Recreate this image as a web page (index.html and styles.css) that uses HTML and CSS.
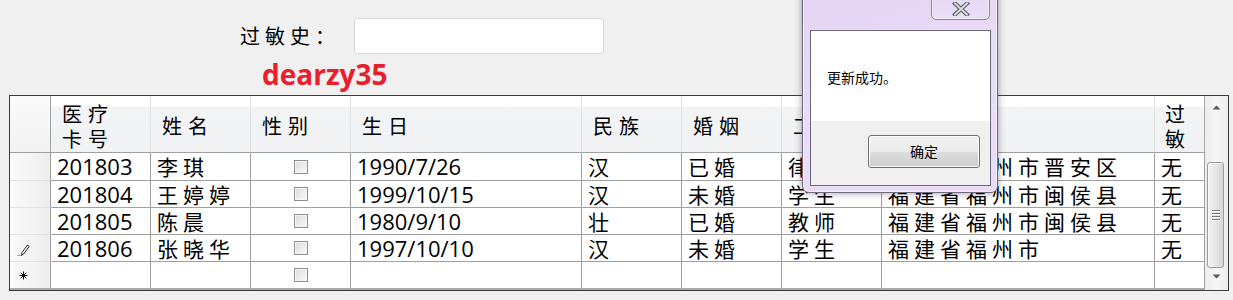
FILE: index.html
```html
<!DOCTYPE html>
<html lang="zh-CN">
<head>
<meta charset="utf-8">
<title>过敏史</title>
<link rel="stylesheet" href="styles.css">
</head>
<body>
<div class="filter">
  <span class="filter-label">过敏史：</span>
  <div class="filter-input"></div>
</div>
<div class="brand">dearzy35</div>

<div class="grid">
  <div class="table">
    <div class="row head">
      <div class="rh corner"></div>
      <div class="hc">医疗<br>卡号</div>
      <div class="hc">姓名</div>
      <div class="hc">性别</div>
      <div class="hc">生日</div>
      <div class="hc">民族</div>
      <div class="hc">婚姻</div>
      <div class="hc">工作</div>
      <div class="hc">地址</div>
      <div class="hc last">过<br>敏</div>
    </div>
    <div class="row first">
      <div class="rh"></div>
      <div class="c num">201803</div>
      <div class="c cjk">李琪</div>
      <div class="c chk"><span class="box"></span></div>
      <div class="c num">1990/7/26</div>
      <div class="c cjk">汉</div>
      <div class="c cjk">已婚</div>
      <div class="c cjk">律师</div>
      <div class="c cjk">福建省福州市晋安区</div>
      <div class="c cjk">无</div>
    </div>
    <div class="row">
      <div class="rh"></div>
      <div class="c num">201804</div>
      <div class="c cjk">王婷婷</div>
      <div class="c chk"><span class="box"></span></div>
      <div class="c num">1999/10/15</div>
      <div class="c cjk">汉</div>
      <div class="c cjk">未婚</div>
      <div class="c cjk">学生</div>
      <div class="c cjk">福建省福州市闽侯县</div>
      <div class="c cjk">无</div>
    </div>
    <div class="row">
      <div class="rh"></div>
      <div class="c num">201805</div>
      <div class="c cjk">陈晨</div>
      <div class="c chk"><span class="box"></span></div>
      <div class="c num">1980/9/10</div>
      <div class="c cjk">壮</div>
      <div class="c cjk">已婚</div>
      <div class="c cjk">教师</div>
      <div class="c cjk">福建省福州市闽侯县</div>
      <div class="c cjk">无</div>
    </div>
    <div class="row">
      <div class="rh icon-cell">
        <svg width="13" height="12" viewBox="0 0 13 12">
          <path d="M0.5 11.5h1M2.5 11.5h1" stroke="#555" stroke-width="1"/>
          <path d="M4.5 11.5 L5 8.5 L10.5 1 L12.2 2.4 L6.8 9.8 Z" fill="#fff" stroke="#222" stroke-width="1" stroke-linejoin="round"/>
        </svg>
      </div>
      <div class="c num">201806</div>
      <div class="c cjk">张晓华</div>
      <div class="c chk"><span class="box"></span></div>
      <div class="c num">1997/10/10</div>
      <div class="c cjk">汉</div>
      <div class="c cjk">未婚</div>
      <div class="c cjk">学生</div>
      <div class="c cjk">福建省福州市</div>
      <div class="c cjk">无</div>
    </div>
    <div class="row lastrow">
      <div class="rh icon-cell star">
        <svg width="9" height="9" viewBox="0 0 9 9">
          <path d="M4.5 0.5v8M0.5 4.5h8M1.7 1.7l5.6 5.6M7.3 1.7l-5.6 5.6" stroke="#111" stroke-width="1"/>
        </svg>
      </div>
      <div class="c"></div>
      <div class="c"></div>
      <div class="c chk"><span class="box"></span></div>
      <div class="c"></div>
      <div class="c"></div>
      <div class="c"></div>
      <div class="c"></div>
      <div class="c"></div>
      <div class="c"></div>
    </div>
  </div>
  <div class="scrollbar">
    <div class="sb-btn up">
      <svg width="9" height="5" viewBox="0 0 9 5"><path d="M0.5 4.5 L4.5 0.5 L8.5 4.5 Z" fill="#5a5a5a"/></svg>
    </div>
    <div class="sb-track">
      <div class="thumb">
        <span class="grip"></span><span class="grip"></span><span class="grip"></span><span class="grip"></span>
      </div>
    </div>
    <div class="sb-btn down">
      <svg width="9" height="5" viewBox="0 0 9 5"><path d="M0.5 0.5 L4.5 4.5 L8.5 0.5 Z" fill="#5a5a5a"/></svg>
    </div>
  </div>
</div>

<div class="dialog">
  <div class="titlebar">
    <div class="close">
      <svg width="18" height="14" viewBox="0 0 18 14">
        <path d="M3 1.5 L15 12.5 M15 1.5 L3 12.5" stroke="#5e5e66" stroke-width="4.2" stroke-linecap="square"/>
        <path d="M3 1.5 L15 12.5 M15 1.5 L3 12.5" stroke="#d8d8de" stroke-width="2" stroke-linecap="square"/>
      </svg>
    </div>
  </div>
  <div class="client">
    <div class="msg">更新成功。</div>
    <div class="footer">
      <div class="ok">确定</div>
    </div>
  </div>
</div>
</body>
</html>
```

FILE: styles.css
```css
html, body {
  margin: 0;
  padding: 0;
}
body {
  width: 1233px;
  height: 300px;
  overflow: hidden;
  position: relative;
  background: #f0f0f0;
  font-family: "Noto Sans CJK SC", "Noto Sans", sans-serif;
  color: #000;
}

.filter {
  display: flex;
  align-items: center;
  height: 36px;
  padding: 18px 0 0 240px;
}
.filter-label {
  width: 114px;
  font-size: 20px;
  letter-spacing: 5px;
  line-height: 36px;
}
.filter-input {
  width: 250px;
  height: 36px;
  box-sizing: border-box;
  background: #fff;
  border: 1px solid #d7d7d7;
  border-radius: 3px;
}

.brand {
  height: 41px;
  padding-left: 262px;
  font-family: "Open Sans", "Noto Sans", sans-serif;
  font-weight: 700;
  font-size: 28px;
  line-height: 41px;
  color: #e8202b;
}

.grid {
  margin-left: 9px;
  width: 1220px;
  height: 196px;
  box-sizing: border-box;
  border: 1px solid #3c3c3c;
  display: flex;
  background: #fff;
}
.table {
  width: 1195px;
  display: flex;
  flex-direction: column;
}
.row {
  display: grid;
  grid-template-columns: 41px 100px 100px 100px 231px 100px 100px 100px 273px 50px;
  height: 27px;
}
.row.head { height: 57px; }
.row.first { height: 28px; }
.row.lastrow { height: 28px; }

.row > div {
  box-sizing: border-box;
  border-right: 1px solid #a0a0a0;
  border-bottom: 1px solid #a0a0a0;
  white-space: nowrap;
}
.row.lastrow > div { border-bottom-width: 2px; border-bottom-color: #ababab; }

.rh {
  background: linear-gradient(to right, #fdfdfd 0, #f7f7f7 25%, #ededed 100%);
}
.row > .rh { border-bottom-color: #e2e2e2; }
.row.head > .rh.corner {
  background: linear-gradient(to bottom, #fafafa 0, #f2f2f2 100%);
  border-bottom-color: #a0a0a0;
}
.row.lastrow > .rh { border-bottom-color: #ababab; }
.icon-cell {
  display: flex;
  align-items: center;
  padding-left: 7px;
}
.icon-cell svg { margin-top: 4px; }
.icon-cell.star { padding-left: 9px; }
.icon-cell.star svg { margin-top: 1px; }

.row.head > .hc {
  display: flex;
  align-items: center;
  padding: 3px 0 0 11px;
  font-size: 20px;
  letter-spacing: 6px;
  line-height: 25px;
  background: linear-gradient(to bottom, #ffffff 0, #ffffff 10px, #f3f4f6 11px, #f1f2f4 100%);
  border-right-color: #e2e2e2;
}
.row.head > .hc.last {
  padding-left: 10px;
  border-right-color: #a8a8a8;
}

.c {
  display: flex;
  align-items: center;
  padding-left: 6px;
  background: #fff;
}
.num {
  font-family: "Open Sans", "Noto Sans", sans-serif;
  font-size: 22px;
  line-height: 25px;
}
.cjk {
  font-size: 21px;
  letter-spacing: 5px;
  line-height: 25px;
}
.c.chk {
  justify-content: center;
  padding-left: 0;
}
.box {
  width: 14px;
  height: 14px;
  box-sizing: border-box;
  border: 1px solid #8e8f8f;
  background: linear-gradient(135deg, #d9d9d9 0, #eeeeee 60%, #fafafa 100%);
  box-shadow: inset 0 0 0 1px #f4f4f4;
}

.scrollbar {
  width: 23px;
  display: flex;
  flex-direction: column;
  background: linear-gradient(to right, #ececec, #f6f6f6 50%, #ececec);
}
.sb-btn {
  height: 18px;
  display: flex;
  justify-content: center;
}
.sb-btn.up { align-items: flex-end; height: 14px; }
.sb-btn.down { align-items: flex-start; height: 16px; padding-top: 1px; }
.sb-track {
  flex: 1;
  padding: 52px 0 0 2px;
}
.thumb {
  width: 17px;
  height: 106px;
  box-sizing: border-box;
  border: 1px solid #9b9b9b;
  border-radius: 3px;
  background: linear-gradient(to right, #f3f3f3 0, #e6e6e6 50%, #d6d6d6 100%);
  box-shadow: inset 1px 1px 0 #fbfbfb;
  display: flex;
  flex-direction: column;
  align-items: center;
  justify-content: center;
  gap: 2px;
}
.grip {
  width: 8px;
  height: 1px;
  background: #7a7a7a;
  box-shadow: 0 1px 0 #fafafa;
}

.dialog {
  position: absolute;
  left: 802px;
  top: -8px;
  width: 196px;
  height: 201px;
  box-sizing: border-box;
  padding: 0 6px 6px 7px;
  border: 1px solid #6e6a7c;
  border-radius: 0 0 7px 7px;
  background: linear-gradient(160deg, #e2d4f2 0, #e9dcf7 45%, #eadcf8 100%);
  box-shadow: 0 0 7px rgba(40, 30, 60, 0.45), inset 0 0 0 1px #f5eefc;
  display: flex;
  flex-direction: column;
}
.titlebar {
  height: 37px;
  display: flex;
  justify-content: flex-end;
  align-items: flex-start;
}
.close {
  width: 59px;
  height: 28px;
  margin: -1px 1px 0 0;
  box-sizing: border-box;
  border: 1px solid #8a86a0;
  border-radius: 0 0 5px 5px;
  background: linear-gradient(to bottom, #e4d8f3, #eadff8);
  box-shadow: inset 0 0 0 1px #f3ecfb;
  display: flex;
  justify-content: center;
  align-items: flex-end;
  padding-bottom: 3px;
}
.client {
  height: 157px;
  box-sizing: border-box;
  border: 1px solid #6c687a;
  background: #fff;
  display: flex;
  flex-direction: column;
}
.msg {
  height: 90px;
  box-sizing: border-box;
  padding: 36px 0 0 16px;
  font-size: 14px;
  line-height: 20px;
}
.footer {
  flex: 1;
  background: #f0f0f0;
  display: flex;
  justify-content: flex-end;
  align-items: flex-start;
  padding: 14px 10px 0 0;
}
.ok {
  width: 112px;
  height: 33px;
  box-sizing: border-box;
  border: 1px solid #707070;
  border-radius: 3px;
  background: linear-gradient(to bottom, #f2f2f2 0, #ebebeb 50%, #dddddd 51%, #cfcfcf 100%);
  box-shadow: inset 0 0 0 1px #fafafa;
  font-size: 14px;
  line-height: 31px;
  text-align: center;
}
```
